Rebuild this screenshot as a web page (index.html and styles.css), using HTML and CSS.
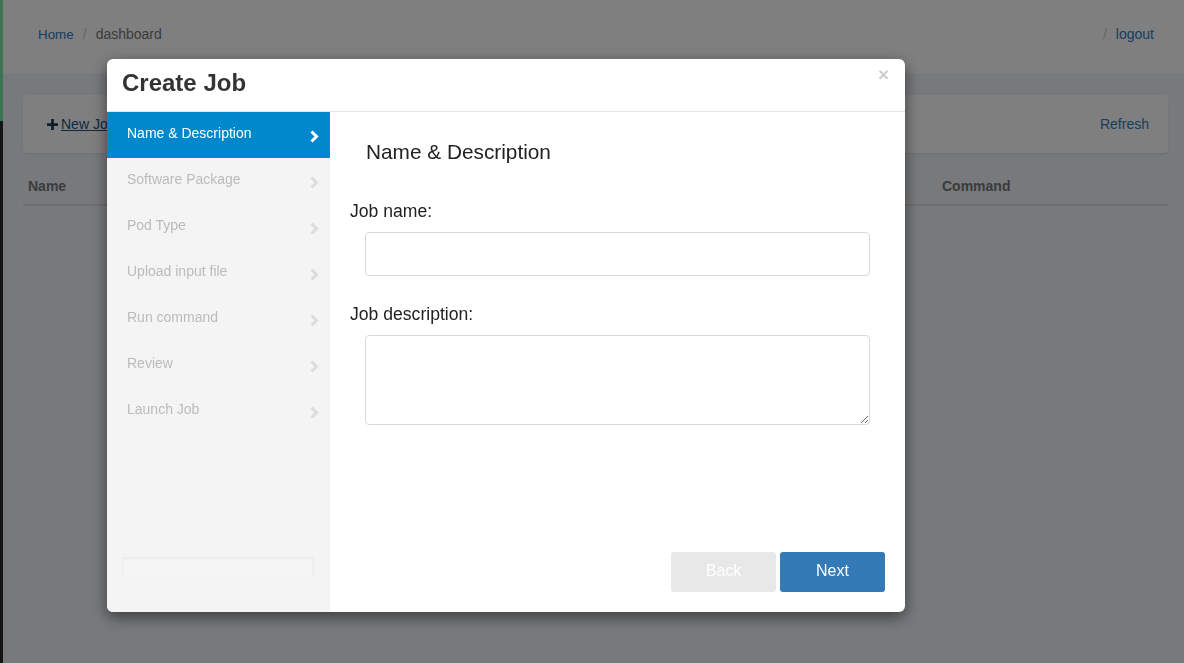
FILE: index.html
```html
<!DOCTYPE html>
<html>
<head>
<meta charset="utf-8">
<link rel="stylesheet" href="styles.css">
</head>
<body>
<div class="app">
  <div class="strip"><div class="strip-top"></div><div class="strip-bottom"></div></div>
  <div class="main">
    <header class="topbar">
      <ol class="crumbs">
        <li><a href="#" class="home">Home</a></li>
        <li class="sep">/</li>
        <li class="current">dashboard</li>
      </ol>
      <ol class="crumbs right">
        <li class="sep">/</li>
        <li><a href="#">logout</a></li>
      </ol>
    </header>
    <section class="content">
      <div class="panel">
        <a href="#" class="newjob"><svg class="plus" viewBox="0 0 12 12" width="11" height="11"><path d="M4.5 0h3v4.5H12v3H7.5V12h-3V7.5H0v-3h4.5z" fill="currentColor"/></svg><span class="u">New Job</span></a>
        <a href="#" class="refresh">Refresh</a>
      </div>
      <div class="table">
        <div class="th name">Name</div>
        <div class="th cmd">Command</div>
      </div>
    </section>
  </div>
</div>

<div class="overlay">
  <div class="modal">
    <div class="modal-header">
      <h2 class="modal-title">Create Job</h2>
      <button class="close">×</button>
    </div>
    <div class="modal-body">
      <nav class="steps">
        <div class="step active"><span>Name &amp; Description</span><svg class="chev" viewBox="0 0 9 13" width="9" height="13"><path d="M1.5 1.5L6.5 6.5L1.5 11.5" fill="none" stroke="currentColor" stroke-width="3"/></svg></div>
        <div class="step"><span>Software Package</span><svg class="chev" viewBox="0 0 9 13" width="9" height="13"><path d="M1.5 1.5L6.5 6.5L1.5 11.5" fill="none" stroke="currentColor" stroke-width="3"/></svg></div>
        <div class="step"><span>Pod Type</span><svg class="chev" viewBox="0 0 9 13" width="9" height="13"><path d="M1.5 1.5L6.5 6.5L1.5 11.5" fill="none" stroke="currentColor" stroke-width="3"/></svg></div>
        <div class="step"><span>Upload input file</span><svg class="chev" viewBox="0 0 9 13" width="9" height="13"><path d="M1.5 1.5L6.5 6.5L1.5 11.5" fill="none" stroke="currentColor" stroke-width="3"/></svg></div>
        <div class="step"><span>Run command</span><svg class="chev" viewBox="0 0 9 13" width="9" height="13"><path d="M1.5 1.5L6.5 6.5L1.5 11.5" fill="none" stroke="currentColor" stroke-width="3"/></svg></div>
        <div class="step"><span>Review</span><svg class="chev" viewBox="0 0 9 13" width="9" height="13"><path d="M1.5 1.5L6.5 6.5L1.5 11.5" fill="none" stroke="currentColor" stroke-width="3"/></svg></div>
        <div class="step"><span>Launch Job</span><svg class="chev" viewBox="0 0 9 13" width="9" height="13"><path d="M1.5 1.5L6.5 6.5L1.5 11.5" fill="none" stroke="currentColor" stroke-width="3"/></svg></div>
        <div class="progress"></div>
      </nav>
      <div class="pane">
        <h3 class="pane-title">Name &amp; Description</h3>
        <div class="group">
          <label class="lbl">Job name:</label>
          <input class="field" type="text">
        </div>
        <div class="group">
          <label class="lbl">Job description:</label>
          <textarea class="field area"></textarea>
        </div>
        <div class="actions">
          <button class="btn back">Back</button>
          <button class="btn next">Next</button>
        </div>
      </div>
    </div>
  </div>
</div>
</body>
</html>
```
FILE: styles.css
```css
* { box-sizing: border-box; }
html, body { margin: 0; padding: 0; height: 100%; }
body {
  font-family: "Liberation Sans", Arial, sans-serif;
  font-size: 14px;
  color: #333;
  background: #f0f2f6;
}
a { color: #337ab7; text-decoration: none; }
.app { display: flex; min-height: 663px; }
.strip { width: 3px; display: flex; flex-direction: column; }
.strip-top { height: 121px; background: #78e6a8; }
.strip-bottom { flex: 1; background: #282828; }
.main { flex: 1; display: flex; flex-direction: column; }
.topbar {
  height: 74px;
  background: #fff;
  border-bottom: 1px solid #f6f6f6;
  display: flex;
  justify-content: space-between;
  align-items: center;
  padding: 0 30px 0 35px;
}
.crumbs { list-style: none; margin: 0; padding: 0; display: flex; line-height: 20px; padding-bottom: 5px; }
.crumbs li { display: block; }
.crumbs .home { font-size: 13.4px; }
.crumbs .sep { color: #ccc; padding: 0 9px; }
.crumbs.right .sep { padding: 0 9px 0 0; }
.crumbs .current { color: #777; }
.content { padding: 21px 16px 0 20px; }
.panel {
  height: 58px;
  background: #fff;
  border-radius: 4px;
  box-shadow: 0 1px 2px rgba(0,0,0,0.08);
  display: flex;
  justify-content: space-between;
  align-items: center;
  padding: 0 19px 0 24px;
}
.newjob { color: #23527c; display: flex; align-items: center; gap: 3px; }
.newjob .plus { color: #1d3b5a; }
.newjob .u { text-decoration: underline; }
.refresh { color: #337ab7; }
.table {
  margin-top: 15px;
  display: flex;
  border-bottom: 2px solid #ddd;
  height: 38px;
  align-items: center;
  padding: 0 5px;
  font-weight: bold;
  color: #777;
}
.th.name { width: 914px; }

.overlay {
  position: fixed;
  inset: 0;
  background: rgba(0,0,0,0.5);
  padding: 59px 0 0 107px;
}
.modal {
  width: 798px;
  height: 553px;
  background: #fff;
  border-radius: 6px;
  box-shadow: 0 5px 15px rgba(0,0,0,0.5);
  display: flex;
  flex-direction: column;
  overflow: hidden;
}
.modal-header {
  height: 53px;
  border-bottom: 1px solid #e5e5e5;
  padding: 11px 16px 0 15px;
  display: flex;
  justify-content: space-between;
  align-items: flex-start;
}
.modal-title { margin: 0; font-size: 24px; line-height: 26px; font-weight: bold; color: #333; }
.close {
  margin-top: -6px;
  border: 0;
  background: none;
  padding: 0;
  font-family: "Liberation Sans", Arial, sans-serif;
  font-size: 19px;
  font-weight: bold;
  line-height: 21px;
  color: #000;
  opacity: 0.2;
}
.modal-body { flex: 1; display: flex; }
.steps {
  width: 223px;
  background: #f4f4f4;
  display: flex;
  flex-direction: column;
}
.step {
  height: 46px;
  padding: 0 11px 4px 20px;
  display: flex;
  align-items: center;
  justify-content: space-between;
  font-size: 14px;
  color: #bbb;
}
.step .chev { color: #dcdcdc; margin-top: 6px; }
.step.active { background: #0088cc; color: #fff; }
.step.active .chev { color: #fff; }
.progress {
  margin: auto 16px 35px 15px;
  height: 20px;
  background: #f5f5f5;
  border: 1px solid #ebebeb;
  border-bottom-color: #f3f3f3;
  border-radius: 4px;
  box-shadow: inset 0 1px 2px rgba(0,0,0,0.05);
}
.pane {
  flex: 1;
  display: flex;
  flex-direction: column;
  padding: 28px 20px 20px 20px;
}
.pane-title { margin: 0 0 38px 16px; font-size: 20.8px; line-height: 23px; font-weight: normal; color: #222; }
.group { display: flex; flex-direction: column; }
.lbl { font-size: 17.6px; line-height: 20px; color: #222; margin-bottom: 11px; }
.field {
  margin-left: 15px;
  width: 505px;
  height: 44px;
  border: 1px solid #d9d9d9;
  border-radius: 4px;
  background: #fff;
  font-family: inherit;
  font-size: 14px;
  padding: 6px 12px;
  margin-bottom: 28px;
}
.field.area { height: 90px; margin-bottom: 0; resize: vertical; }
.actions { margin-top: auto; display: flex; justify-content: flex-end; gap: 4px; }
.btn {
  width: 105px;
  height: 40px;
  border: 0;
  border-radius: 3px;
  font-family: "Liberation Sans", Arial, sans-serif;
  font-size: 16px;
  color: #fff;
  padding: 0 0 2px;
}
.btn.back { background: #e8e8e8; }
.btn.next { background: #337ab7; }
```
